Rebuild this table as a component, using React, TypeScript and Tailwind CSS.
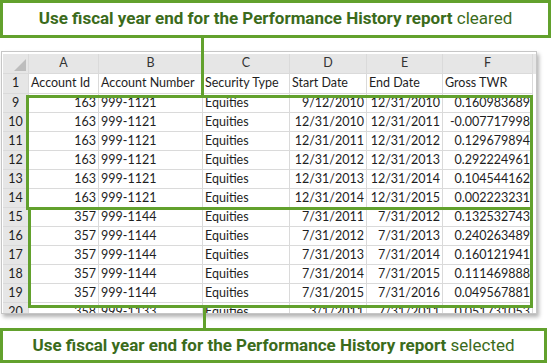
import React from 'react';

const cols = ['A', 'B', 'C', 'D', 'E', 'F'];

const rows = [
  { n: 9, id: '163', acct: '999-1121', start: '9/12/2010', end: '12/31/2010', twr: '0.160983689' },
  { n: 10, id: '163', acct: '999-1121', start: '12/31/2010', end: '12/31/2011', twr: '-0.007717998' },
  { n: 11, id: '163', acct: '999-1121', start: '12/31/2011', end: '12/31/2012', twr: '0.129679894' },
  { n: 12, id: '163', acct: '999-1121', start: '12/31/2012', end: '12/31/2013', twr: '0.292224961' },
  { n: 13, id: '163', acct: '999-1121', start: '12/31/2013', end: '12/31/2014', twr: '0.104544162' },
  { n: 14, id: '163', acct: '999-1121', start: '12/31/2014', end: '12/31/2015', twr: '0.002223231' },
  { n: 15, id: '357', acct: '999-1144', start: '7/31/2011', end: '7/31/2012', twr: '0.132532743' },
  { n: 16, id: '357', acct: '999-1144', start: '7/31/2012', end: '7/31/2013', twr: '0.240263489' },
  { n: 17, id: '357', acct: '999-1144', start: '7/31/2013', end: '7/31/2014', twr: '0.160121941' },
  { n: 18, id: '357', acct: '999-1144', start: '7/31/2014', end: '7/31/2015', twr: '0.111469888' },
  { n: 19, id: '357', acct: '999-1144', start: '7/31/2015', end: '7/31/2016', twr: '0.049567881' },
  { n: 20, id: '358', acct: '999-1133', start: '3/1/2011', end: '7/31/2011', twr: '0.051731053' },
];

const grid = 'grid grid-cols-[26px_70px_104px_87px_77px_76px_90px]';
const cell = 'border-r border-b border-[#dadada] px-[2px] whitespace-nowrap overflow-hidden';

const Callout = ({ word, className }: { word: string; className: string }) => (
  <div
    className={`border-[3px] border-[#62a12d] bg-white flex items-center justify-center text-[17px] text-[#3b6b1b] font-['Roboto',sans-serif] ${className}`}
  >
    <span>
      <b className="font-bold">Use fiscal year end for the Performance History report</b> {word}
    </span>
  </div>
);

export default function App() {
  return (
    <div className="relative w-[557px] h-[364px] bg-white overflow-hidden">
      <Callout word="cleared" className="w-[551px] h-[38px]" />

      <div className="mt-[13px] ml-[1px] w-[536px] h-[263px] border border-[#c6c6c6] bg-white pl-[1px] pt-[2px] overflow-hidden shadow-[2px_3px_4px_rgba(0,0,0,0.3)] font-['Lato',sans-serif] text-[12.5px] text-[#1e1e1e] leading-none">
        <div className={`${grid} h-[20px] bg-[#e6e6e6] text-[#333]`}>
          <div className={`${cell} relative border-[#cfcfcf]`}>
            <div className="absolute right-[2px] bottom-[2px] w-0 h-0 border-l-[12px] border-l-transparent border-b-[12px] border-b-[#bdbdbd]" />
          </div>
          {cols.map((c) => (
            <div key={c} className={`${cell} border-[#cfcfcf] flex items-center justify-center`}>
              {c}
            </div>
          ))}
        </div>
        <div className={`${grid} h-[20px]`}>
          <div className={`${cell} bg-[#e6e6e6] border-[#cfcfcf] flex items-center justify-center`}>1</div>
          <div className={`${cell} flex items-center`}>Account Id</div>
          <div className={`${cell} flex items-center`}>Account Number</div>
          <div className={`${cell} flex items-center`}>Security Type</div>
          <div className={`${cell} flex items-center`}>Start Date</div>
          <div className={`${cell} flex items-center`}>End Date</div>
          <div className={`${cell} flex items-center`}>Gross TWR</div>
        </div>
        {rows.map((r) => (
          <div key={r.n} className={`${grid} h-[19px]`}>
            <div className={`${cell} bg-[#e6e6e6] border-[#cfcfcf] flex items-center justify-center`}>{r.n}</div>
            <div className={`${cell} flex items-center justify-end`}>{r.id}</div>
            <div className={`${cell} flex items-center`}>{r.acct}</div>
            <div className={`${cell} flex items-center`}>Equities</div>
            <div className={`${cell} flex items-center justify-end`}>{r.start}</div>
            <div className={`${cell} flex items-center justify-end`}>{r.end}</div>
            <div className={`${cell} flex items-center justify-end`}>{r.twr}</div>
          </div>
        ))}
      </div>

      <Callout word="selected" className="mt-[14px] w-[547px] h-[35px]" />

      {/* connectors and highlight boxes over the sheet */}
      <div className="absolute left-[201px] top-[36px] w-[3px] h-[60px] bg-[#62a12d]" />
      <div className="absolute left-[26px] top-[95px] w-[507px] h-[115px] border-[3px] border-[#62a12d]" />
      <div className="absolute left-[28px] top-[207px] w-[505px] h-[101px] border-[3px] border-[#62a12d]" />
      <div className="absolute left-[203px] top-[307px] w-[3px] h-[22px] bg-[#62a12d]" />
    </div>
  );
}
